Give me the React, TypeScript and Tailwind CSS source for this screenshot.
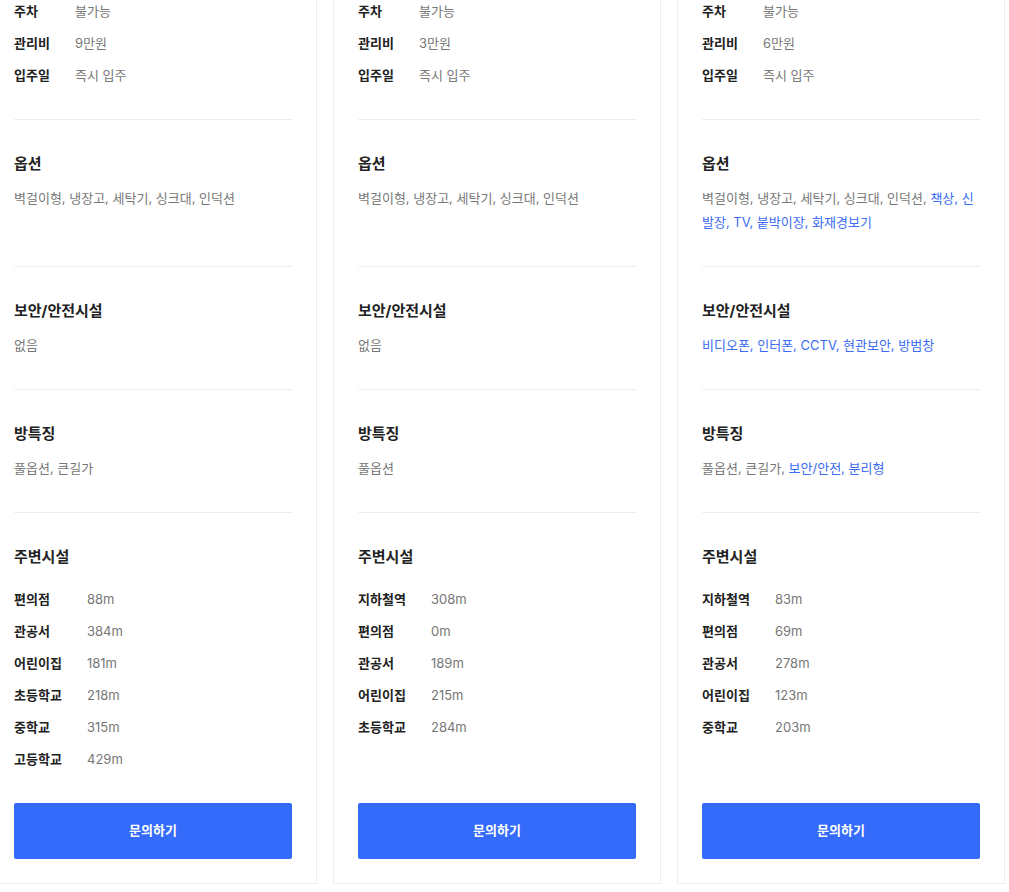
import React from 'react';

type Part = { text: string; hi?: boolean };

interface Listing {
    parking: string;
    fee: string;
    moveIn: string;
    options: Part[];
    security: Part[];
    features: Part[];
    nearby: [string, string][];
}

const listings: Listing[] = [
    {
        parking: '불가능',
        fee: '9만원',
        moveIn: '즉시 입주',
        options: [{ text: '벽걸이형, 냉장고, 세탁기, 싱크대, 인덕션' }],
        security: [{ text: '없음' }],
        features: [{ text: '풀옵션, 큰길가' }],
        nearby: [
            ['편의점', '88m'],
            ['관공서', '384m'],
            ['어린이집', '181m'],
            ['초등학교', '218m'],
            ['중학교', '315m'],
            ['고등학교', '429m'],
        ],
    },
    {
        parking: '불가능',
        fee: '3만원',
        moveIn: '즉시 입주',
        options: [{ text: '벽걸이형, 냉장고, 세탁기, 싱크대, 인덕션' }],
        security: [{ text: '없음' }],
        features: [{ text: '풀옵션' }],
        nearby: [
            ['지하철역', '308m'],
            ['편의점', '0m'],
            ['관공서', '189m'],
            ['어린이집', '215m'],
            ['초등학교', '284m'],
        ],
    },
    {
        parking: '불가능',
        fee: '6만원',
        moveIn: '즉시 입주',
        options: [
            { text: '벽걸이형, 냉장고, 세탁기, 싱크대, 인덕션, ' },
            { text: '책상, 신발장, TV, 붙박이장, 화재경보기', hi: true },
        ],
        security: [{ text: '비디오폰, 인터폰, CCTV, 현관보안, 방범창', hi: true }],
        features: [
            { text: '풀옵션, 큰길가, ' },
            { text: '보안/안전, 분리형', hi: true },
        ],
        nearby: [
            ['지하철역', '83m'],
            ['편의점', '69m'],
            ['관공서', '278m'],
            ['어린이집', '123m'],
            ['중학교', '203m'],
        ],
    },
];

const Parts: React.FC<{ parts: Part[] }> = ({ parts }) => (
    <>
        {parts.map((p, i) => (
            <span key={i} className={p.hi ? 'text-[#3a6cf4]' : ''}>
                {p.text}
            </span>
        ))}
    </>
);

const Section: React.FC<{ title: string; children: React.ReactNode }> = ({ title, children }) => (
    <div className="border-t border-[#eeeeee] pt-8 pb-8">
        <h3 className="text-[15px] leading-6 font-bold text-[#222] mb-[10px]">{title}</h3>
        {children}
    </div>
);

const Card: React.FC<{ item: Listing }> = ({ item }) => (
    <div className="w-[328px] shrink-0 border border-[#eeeeee] bg-white px-6 pt-6 pb-6 flex flex-col">
        <div className="flex flex-col gap-2 pb-8">
            {[
                ['주차', item.parking],
                ['관리비', item.fee],
                ['입주일', item.moveIn],
            ].map(([k, v]) => (
                <div key={k} className="flex text-[13px] leading-6">
                    <span className="w-[61px] shrink-0 font-bold text-[#222]">{k}</span>
                    <span className="text-[#777]">{v}</span>
                </div>
            ))}
        </div>
        <Section title="옵션">
            <p className="text-[13px] leading-6 text-[#777] break-all min-h-12">
                <Parts parts={item.options} />
            </p>
        </Section>
        <Section title="보안/안전시설">
            <p className="text-[13px] leading-6 text-[#777]">
                <Parts parts={item.security} />
            </p>
        </Section>
        <Section title="방특징">
            <p className="text-[13px] leading-6 text-[#777]">
                <Parts parts={item.features} />
            </p>
        </Section>
        <div className="border-t border-[#eeeeee] pt-8 flex-1 flex flex-col">
            <h3 className="text-[15px] leading-6 font-bold text-[#222] mb-[18px]">주변시설</h3>
            <div className="flex-1 flex flex-col gap-2 pb-8">
                {item.nearby.map(([k, v]) => (
                    <div key={k} className="flex text-[13px] leading-6">
                        <span className="w-[73px] shrink-0 font-bold text-[#222]">{k}</span>
                        <span className="text-[#777]">{v}</span>
                    </div>
                ))}
            </div>
            <button className="h-14 w-full rounded-[2px] bg-[#346bfa] text-white text-[13px] font-bold">
                문의하기
            </button>
        </div>
    </div>
);

export default function App() {
    return (
        <div
            className="w-[1009px] h-[892px] overflow-hidden bg-white"
            style={{ fontFamily: 'Inter, "Noto Sans CJK KR", sans-serif' }}
        >
            <div className="flex gap-4 ml-[-11px] mt-[-26px] items-stretch">
                {listings.map((item, i) => (
                    <Card key={i} item={item} />
                ))}
            </div>
        </div>
    );
}
